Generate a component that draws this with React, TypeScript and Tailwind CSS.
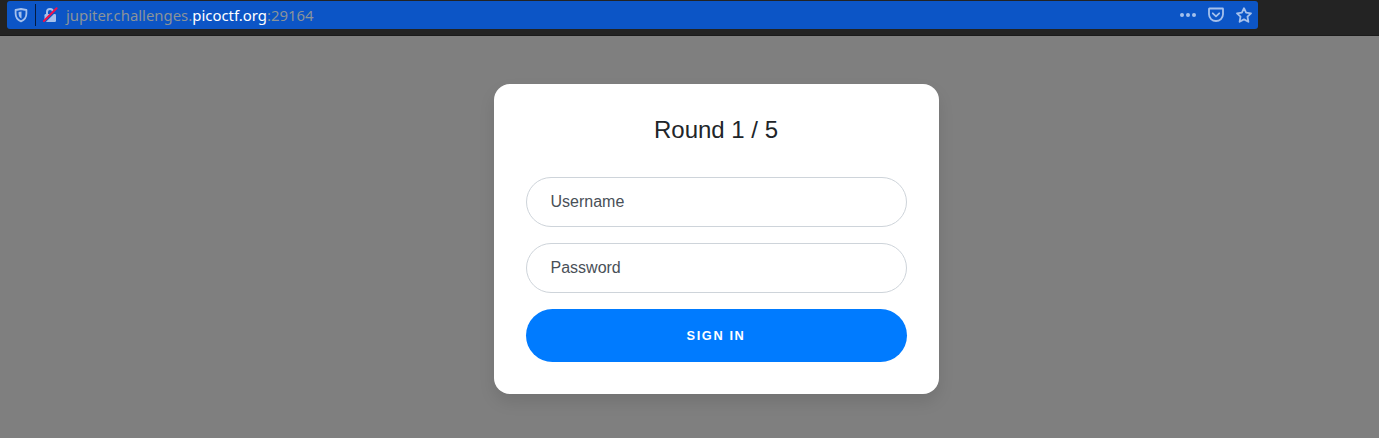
import React from "react";

function ShieldIcon() {
  return (
    <svg width="16" height="16" viewBox="0 0 16 16" fill="none">
      <path d="M8 2 L13.4 3 V6.6 C13.4 10.6 11.2 13.1 8 14.3 C4.8 13.1 2.6 10.6 2.6 6.6 V3 Z" stroke="#a4c0ec" strokeWidth="1.8" strokeLinejoin="round" />
      <path d="M8.5 4.6 V11.6 C6.6 10.6 5.6 9 5.6 6.7 V5.1 Z" fill="#a4c0ec" />
    </svg>
  );
}

function InsecureLockIcon() {
  return (
    <svg width="16" height="16" viewBox="0 0 16 16" fill="none">
      <path d="M5 8 V5.1 a3 3 0 0 1 6 0 V8" stroke="#a4c0ec" strokeWidth="2" />
      <rect x="2.5" y="7" width="11.5" height="8" rx="1.3" fill="#a4c0ec" />
      <path d="M2.2 15 L15.2 2" stroke="#0c55c6" strokeWidth="2.4" />
      <path d="M1.9 14 L14.6 1.3" stroke="#f0114b" strokeWidth="2" strokeLinecap="round" />
    </svg>
  );
}

function MoreIcon() {
  return (
    <svg width="16" height="16" viewBox="0 0 16 16" fill="#a4c0ec">
      <circle cx="2" cy="8" r="2" />
      <circle cx="8" cy="8" r="2" />
      <circle cx="14" cy="8" r="2" />
    </svg>
  );
}

function PocketIcon() {
  return (
    <svg width="16" height="16" viewBox="0 0 16 16" fill="none" stroke="#a4c0ec" strokeWidth="1.8" strokeLinecap="round" strokeLinejoin="round">
      <path d="M1.4 1.5 H14.6 a.4 .4 0 0 1 .4 .4 V7.3 a7 6.7 0 0 1 -14 0 V1.9 a.4 .4 0 0 1 .4 -.4 Z" />
      <path d="M4.8 6.3 L8 9.3 L11.2 6.3" />
    </svg>
  );
}

function StarIcon() {
  return (
    <svg width="16" height="16" viewBox="0 0 16 16" fill="none" stroke="#a4c0ec" strokeWidth="1.8" strokeLinejoin="round">
      <path d="M8 1.2 L10.1 5.6 L15 6.3 L11.5 9.7 L12.4 14.8 L8 12.4 L3.6 14.8 L4.5 9.7 L1 6.3 L5.9 5.6 Z" />
    </svg>
  );
}

function AddressBar() {
  return (
    <header className="flex h-9 items-start border-b border-[#1b1b1b] bg-[#232323] pt-px pl-[7px]">
      <div className="flex h-7 w-[1251px] items-center rounded-[3px] bg-[#0c55c6] pr-1.5 pl-1.5">
        <ShieldIcon />
        <div className="ml-1.5 h-[22px] w-px bg-[#051a40]" />
        <div className="ml-1.5">
          <InsecureLockIcon />
        </div>
        <div className="ml-2 flex-1 font-['Noto_Sans',sans-serif] text-[14.9px] leading-5 whitespace-nowrap text-[#8a9399]">
          jupiter.challenges.<span className="text-white">picoctf.org</span>:29164
        </div>
        <div className="flex gap-3">
          <MoreIcon />
          <PocketIcon />
          <StarIcon />
        </div>
      </div>
    </header>
  );
}

const fieldClass =
  "block h-[50px] w-full rounded-full border border-[#ced4da] bg-white px-[23.5px] text-base text-[#495057] outline-none placeholder:text-[#495057] placeholder:opacity-100";

export default function App() {
  return (
    <div className="flex h-[438px] flex-col overflow-hidden bg-[#7f7f7f] font-['Liberation_Sans',sans-serif]">
      <AddressBar />
      <main className="flex-1 pt-12 pl-[494px]">
        <form className="h-[310px] w-[445px] rounded-2xl bg-white p-8 shadow-[0_8px_16px_0_rgba(0,0,0,0.1)]" onSubmit={(e) => e.preventDefault()}>
          <h5 className="mb-[34px] pr-px text-center text-2xl leading-[27px] text-[#212529]">Round 1 / 5</h5>
          <div className="flex flex-col gap-4">
            <input className={fieldClass} type="text" placeholder="Username" />
            <input className={fieldClass} type="password" placeholder="Password" />
            <button type="submit" className="h-[53px] w-full rounded-full bg-[#007bff] pr-px text-[12.8px] font-bold tracking-[1.6px] text-white">
              SIGN IN
            </button>
          </div>
        </form>
      </main>
    </div>
  );
}
